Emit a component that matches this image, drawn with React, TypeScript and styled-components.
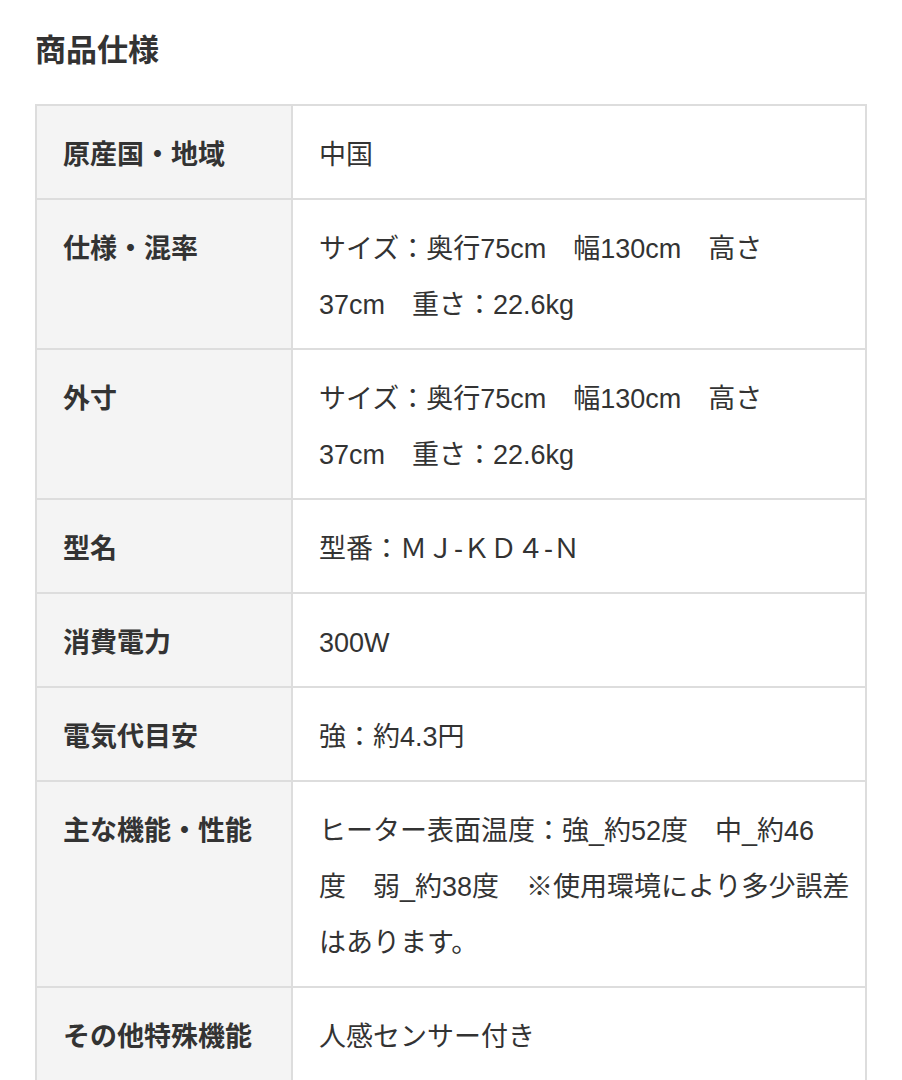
import React from 'react';
import styled, { createGlobalStyle } from 'styled-components';

const GlobalStyle = createGlobalStyle`
  html, body {
    margin: 0;
    padding: 0;
    background: #ffffff;
  }
  body {
    font-family: "Liberation Sans", "Noto Sans CJK JP", sans-serif;
    color: #333333;
  }
`;

const Page = styled.div`
  padding: 28px 35px 0 35px;
`;

const Title = styled.h2`
  margin: 0 0 31px 0;
  font-size: 31px;
  line-height: 45px;
  font-weight: 700;
  color: #333333;
`;

const SpecTable = styled.table`
  width: 832px;
  border-collapse: collapse;
  table-layout: fixed;
  border: 2px solid #dddddd;
`;

const HeadCell = styled.th`
  width: 256px;
  box-sizing: border-box;
  background: #f4f4f4;
  border: 2px solid #dddddd;
  padding: 21px 16px 15px 26px;
  text-align: left;
  vertical-align: top;
  font-size: 27px;
  line-height: 56px;
  font-weight: 700;
  color: #333333;
  white-space: nowrap;
`;

const ValueCell = styled.td`
  border: 2px solid #dddddd;
  padding: 21px 20px 15px 26px;
  vertical-align: top;
  font-size: 27px;
  line-height: 56px;
  font-weight: 400;
  color: #333333;
  white-space: nowrap;
`;

const Line = styled.span`
  display: block;
`;

const specs: { label: string; lines: string[] }[] = [
  { label: '原産国・地域', lines: ['中国'] },
  { label: '仕様・混率', lines: ['サイズ：奥行75cm　幅130cm　高さ', '37cm　重さ：22.6kg'] },
  { label: '外寸', lines: ['サイズ：奥行75cm　幅130cm　高さ', '37cm　重さ：22.6kg'] },
  { label: '型名', lines: ['型番：ＭＪ-ＫＤ４-Ｎ'] },
  { label: '消費電力', lines: ['300W'] },
  { label: '電気代目安', lines: ['強：約4.3円'] },
  {
    label: '主な機能・性能',
    lines: ['ヒーター表面温度：強_約52度　中_約46', '度　弱_約38度　※使用環境により多少誤差', 'はあります。'],
  },
  { label: 'その他特殊機能', lines: ['人感センサー付き'] },
];

export default function App() {
  return (
    <>
      <GlobalStyle />
      <Page>
        <Title>商品仕様</Title>
        <SpecTable>
          <tbody>
            {specs.map(({ label, lines }) => (
              <tr key={label}>
                <HeadCell>{label}</HeadCell>
                <ValueCell>
                  {lines.map((line) => (
                    <Line key={line}>{line}</Line>
                  ))}
                </ValueCell>
              </tr>
            ))}
          </tbody>
        </SpecTable>
      </Page>
    </>
  );
}
